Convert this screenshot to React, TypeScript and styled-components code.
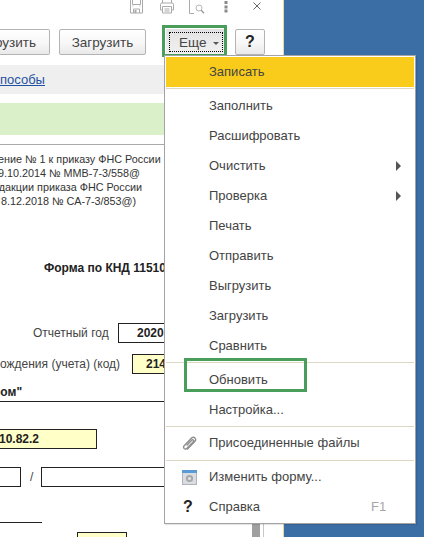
import React from "react";
import styled, { createGlobalStyle } from "styled-components";

const Global = createGlobalStyle`
  html, body { margin: 0; padding: 0; background: #3b6ea5; }
  #root { width: 424px; height: 537px; overflow: hidden; }
  * { box-sizing: border-box; }
`;

const Screen = styled.div`
  position: relative;
  width: 424px;
  height: 537px;
  overflow: hidden;
  background: #3b6ea5;
  font-family: "Liberation Sans", Arial, sans-serif;
  color: #444;
`;
const FormWindow = styled.div`
  width: 284px;
  height: 537px;
  background: #fff;
  border-right: 1px solid #e8d9a0;
  display: flex;
  flex-direction: column;
  overflow: hidden;
`;
const TitleBar = styled.div`
  height: 29px;
  flex: none;
  display: flex;
  align-items: flex-start;
  padding-left: 129px;
`;
const TitleIcon = styled.span<{ $w: number; $mt?: number }>`
  width: ${(p) => p.$w}px;
  height: 16px;
  margin-top: ${(p) => p.$mt ?? 0}px;
  display: flex;
  justify-content: flex-start;
`;
const Toolbar = styled.div`
  height: 36px;
  flex: none;
  display: flex;
  align-items: flex-start;
`;
const Button = styled.div<{ $w: number; $ml?: number }>`
  width: ${(p) => p.$w}px;
  height: 26px;
  margin-left: ${(p) => p.$ml ?? 0}px;
  border: 1px solid #b4b4b4;
  border-radius: 2px;
  background: linear-gradient(#fff, #f7f7f7 55%, #e9e9e9);
  display: flex;
  align-items: center;
  justify-content: center;
  font-size: 13.5px;
  color: #444;
  flex: none;
  overflow: hidden;
`;
const CutButton = styled(Button)`
  justify-content: flex-end;
  padding-right: 13px;
  border-left: 0;
  border-radius: 0 2px 2px 0;
`;
const HelpButton = styled(Button)`
  font-size: 16px;
  font-weight: 700;
  color: #222;
`;
const MoreFrame = styled.div`
  width: 65px;
  height: 32px;
  margin: -4px 0 0 16px;
  border: 3px solid #4a9e5c;
  padding: 1px 0 0 1px;
  flex: none;
  background: #fff;
`;
const MoreButton = styled.div`
  height: 25px;
  background: linear-gradient(#e2e2e2, #ececec 60%, #f0f0f0);
  display: flex;
  align-items: flex-end;
  padding: 0 1px 2px 3px;
`;
const MoreFocus = styled.div`
  flex: 1;
  height: 20px;
  border: 1px dotted #000;
  display: flex;
  align-items: center;
  padding-left: 9px;
  gap: 7px;
  font-size: 13.5px;
  color: #444;
`;
const Caret = styled.span`
  width: 0;
  height: 0;
  margin-top: 2px;
  border-left: 3px solid transparent;
  border-right: 3px solid transparent;
  border-top: 3px solid #555;
`;
const LinkBar = styled.div`
  height: 29px;
  flex: none;
  background: #efefef;
  display: flex;
  align-items: center;
  font-size: 13px;
`;
const DocLink = styled.span`
  color: #1f4fa0;
  text-decoration: underline;
`;
const NoticeBar = styled.div`
  height: 32px;
  flex: none;
  margin-top: 9px;
  background: #d9f0c8;
`;
const Body = styled.div`
  margin-top: 9px;
  flex: 1;
  border-top: 1px solid #aaa;
  display: flex;
  min-height: 0;
`;
const Sheet = styled.div`
  width: 252px;
  flex: none;
  overflow: hidden;
  display: flex;
  flex-direction: column;
  padding-top: 7px;
  font-size: 12px;
  color: #333;
`;
const ScrollTrack = styled.div`
  width: 8px;
  flex: none;
  background: #a0a0a0;
`;
const SideRule = styled.div`
  margin-left: 3px;
  width: 1px;
  background: #c8c8c8;
`;
const OrderLine = styled.div<{ $ml?: number }>`
  height: 14px;
  line-height: 14px;
  font-size: 10.8px;
  white-space: nowrap;
  margin-left: ${(p) => p.$ml ?? 0}px;
`;
const Row = styled.div<{ $mt: number; $h?: number }>`
  margin-top: ${(p) => p.$mt}px;
  height: ${(p) => p.$h ?? 20}px;
  display: flex;
  align-items: center;
  white-space: nowrap;
  flex: none;
`;
const Label = styled.span<{ $ml?: number; $w?: number; $bold?: boolean }>`
  margin-left: ${(p) => p.$ml ?? 0}px;
  width: ${(p) => (p.$w ? `${p.$w}px` : "auto")};
  flex: none;
  font-weight: ${(p) => (p.$bold ? 700 : 400)};
  font-size: 12px;
  color: ${(p) => (p.$bold ? "#222" : "#444")};
`;
const Cell = styled.div<{ $w: number; $ml?: number; $fill?: boolean; $indent?: number }>`
  width: ${(p) => p.$w}px;
  height: 20px;
  margin-left: ${(p) => p.$ml ?? 0}px;
  flex: none;
  border: 1px solid #222;
  background: ${(p) => (p.$fill ? "#ffffc8" : "#fff")};
  font-weight: 700;
  font-size: 12px;
  line-height: 18px;
  text-indent: ${(p) => p.$indent ?? 0}px;
  color: #222;
`;
const UnderRule = styled.div`
  height: 1px;
  background: #222;
  flex: none;
`;
const ShortRule = styled.div`
  width: 42px;
  height: 1px;
  background: #222;
  flex: none;
  margin-top: 35px;
`;
const Menu = styled.div`
  position: absolute;
  left: 164px;
  top: 55px;
  width: 252px;
  height: 469px;
  background: #fff;
  border: 1px solid #a3a3a3;
  padding: 1px;
  display: flex;
  flex-direction: column;
  box-shadow: 1px 1px 1px rgba(0, 0, 0, 0.1);
`;
const Item = styled.div<{ $active?: boolean }>`
  height: 30px;
  flex: none;
  position: relative;
  display: flex;
  align-items: center;
  padding: 0 0 2px 43px;
  font-size: 13px;
  color: #444;
  background: ${(p) => (p.$active ? "#f9cc1c" : "transparent")};
`;
const ItemIcon = styled.span`
  position: absolute;
  left: 14px;
  top: 6px;
  width: 18px;
  height: 18px;
  display: flex;
  align-items: center;
  justify-content: center;
`;
const HelpIcon = styled(ItemIcon)`
  left: 13px;
`;
const QuestionGlyph = styled.span`
  font-size: 16px;
  font-weight: 700;
  color: #222;
`;
const Arrow = styled.span`
  position: absolute;
  left: 230px;
  top: 10px;
  width: 0;
  height: 0;
  border-top: 5px solid transparent;
  border-bottom: 5px solid transparent;
  border-left: 5px solid #555;
`;
const Shortcut = styled.span`
  position: absolute;
  left: 205px;
  color: #a6a6a6;
`;
const Divider = styled.div<{ $h: number; $offset: number }>`
  height: ${(p) => p.$h}px;
  padding-top: ${(p) => p.$offset}px;
  flex: none;
  &::before {
    content: "";
    display: block;
    height: 1px;
    background: #dcd8c4;
  }
`;
const Callout = styled.span`
  position: absolute;
  left: 18px;
  top: -7px;
  width: 123px;
  height: 34px;
  border: 3px solid #4a9e5c;
  pointer-events: none;
`;

const Floppy = () => (
  <svg width="15" height="15" viewBox="0 0 15 15" fill="none" stroke="#aaa">
    <path d="M1.5-1.5h12v14.5h-12z" />
    <path d="M3.5-1.5v6h8v-6" />
    <path d="M4 5.5v1M11 5.5v1" />
    <path d="M4.5 13v-4h6v4" />
    <rect x="5.5" y="10" width="2" height="3" fill="#aaa" stroke="none" />
  </svg>
);
const Printer = () => (
  <svg width="16" height="15" viewBox="0 0 16 15" fill="none" stroke="#aaa">
    <path d="M3.5 4V.5h9V4" />
    <path d="M3.5 11h-2V5.5q0-1.5 1.5-1.5h10q1.5 0 1.5 1.5V11h-2" />
    <path d="M3.5 7.5h9v6.5h-9z" />
    <path d="M5.5 10h5M5.5 12h5" />
  </svg>
);
const Preview = () => (
  <svg width="16" height="15" viewBox="0 0 16 15" fill="none" stroke="#aaa">
    <path d="M.5-1v14.5H5" />
    <circle cx="10" cy="8" r="3" stroke="#b5b5b5" />
    <path d="M12.2 10.2l2.8 3" stroke="#999" strokeWidth="1.4" />
  </svg>
);
const Dots = () => (
  <svg width="4" height="14" viewBox="0 0 4 14" fill="#8a8a8a">
    <rect x="0.5" y="1" width="3" height="3" />
    <rect x="0.5" y="5.5" width="3" height="3" />
    <rect x="0.5" y="9.5" width="3" height="3" />
  </svg>
);
const Close = () => (
  <svg width="8" height="8" viewBox="0 0 8 8" stroke="#666" strokeWidth="1" fill="none">
    <path d="M.5.5l7 7M7.5.5l-7 7" />
  </svg>
);
const Clip = () => (
  <svg width="15" height="15" viewBox="0 0 15 15" fill="none" stroke="#8e8e8e" strokeWidth="1.4">
    <path d="M5 13.4L13 5.2c1.4-1.5.3-3.9-1.6-3.9-.7 0-1.3.3-1.8.8L2.4 9.4c-1 1-1 2.2-.3 3 .8.8 2 .7 2.9-.2l6.3-6.4c.6-.6.5-1.3.1-1.7-.5-.4-1.1-.4-1.7.2L4.6 9.4" />
  </svg>
);
const FormGlyph = () => (
  <svg width="15" height="15" viewBox="0 0 15 15">
    <rect x="0.5" y="0.5" width="14" height="14" fill="#d9dde2" stroke="#b0b4b8" />
    <rect x="0" y="0" width="15" height="3" fill="#5b9bd5" />
    <circle cx="7.5" cy="8.5" r="3.6" fill="#a8a8a8" />
    <circle cx="7.5" cy="8.5" r="1.6" fill="#e3e3e3" />
  </svg>
);

const plain = ["Заполнить", "Расшифровать"];
const nested = ["Очистить", "Проверка"];
const actions = ["Печать", "Отправить", "Выгрузить", "Загрузить", "Сравнить"];

export default function App() {
  return (
    <Screen>
      <Global />
      <FormWindow>
        <TitleBar>
          <TitleIcon $w={30}><Floppy /></TitleIcon>
          <TitleIcon $w={30} $mt={-1}><Printer /></TitleIcon>
          <TitleIcon $w={35}><Preview /></TitleIcon>
          <TitleIcon $w={29}><Dots /></TitleIcon>
          <TitleIcon $w={8} $mt={2}><Close /></TitleIcon>
        </TitleBar>
        <Toolbar>
          <CutButton $w={50}>рузить</CutButton>
          <Button $w={87} $ml={9}>Загрузить</Button>
          <MoreFrame>
            <MoreButton>
              <MoreFocus>Еще<Caret /></MoreFocus>
            </MoreButton>
          </MoreFrame>
          <HelpButton $w={30} $ml={8}>?</HelpButton>
        </Toolbar>
        <LinkBar><DocLink>пособы</DocLink></LinkBar>
        <NoticeBar />
        <Body>
          <Sheet>
            <OrderLine $ml={-2}>ение № 1 к приказу ФНС России</OrderLine>
            <OrderLine $ml={-2}>9.10.2014 № ММВ-7-3/558@</OrderLine>
            <OrderLine $ml={-7}>едакции приказа ФНС России</OrderLine>
            <OrderLine $ml={1}>8.12.2018 № СА-7-3/853@)</OrderLine>
            <Row $mt={50}><Label $ml={44} $bold>Форма по КНД 1151078</Label></Row>
            <Row $mt={45}>
              <Label $ml={33} $w={85}>Отчетный год</Label>
              <Cell $w={110} $indent={18}>2020</Cell>
            </Row>
            <Row $mt={11}>
              <Label $w={132}>ождения (учета) (код)</Label>
              <Cell $w={80} $fill $indent={13}>2146</Cell>
            </Row>
            <Row $mt={9} $h={18}><Label $ml={-7} $bold>ром"</Label></Row>
            <UnderRule />
            <Row $mt={27}><Cell $w={98} $fill $ml={-1} $indent={-1}>10.82.2</Cell></Row>
            <Row $mt={18}>
              <Cell $w={22} $ml={-1} />
              <Label $ml={9} $w={11}>/</Label>
              <Cell $w={200} />
            </Row>
            <ShortRule />
            <Row $mt={9}><Cell $w={50} $fill $ml={77} /></Row>
          </Sheet>
          <ScrollTrack />
          <SideRule />
        </Body>
      </FormWindow>
      <Menu>
        <Item $active>Записать</Item>
        <Divider $h={4} $offset={1} />
        {plain.map((t) => <Item key={t}>{t}</Item>)}
        {nested.map((t) => <Item key={t}>{t}<Arrow /></Item>)}
        {actions.map((t) => <Item key={t}>{t}</Item>)}
        <Divider $h={4} $offset={1} />
        <Item>Обновить<Callout /></Item>
        <Item>Настройка...</Item>
        <Divider $h={3} $offset={1} />
        <Item><ItemIcon><Clip /></ItemIcon>Присоединенные файлы</Item>
        <Divider $h={4} $offset={2} />
        <Item><ItemIcon><FormGlyph /></ItemIcon>Изменить форму...</Item>
        <Item><HelpIcon><QuestionGlyph>?</QuestionGlyph></HelpIcon>Справка<Shortcut>F1</Shortcut></Item>
      </Menu>
    </Screen>
  );
}
